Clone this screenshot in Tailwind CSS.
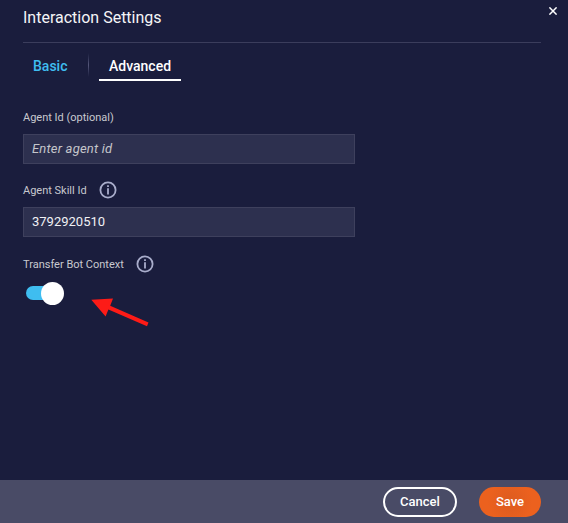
<!DOCTYPE html>
<html lang="en">
<head>
<meta charset="utf-8">
<title>Interaction Settings</title>
<script src="https://cdn.jsdelivr.net/npm/@tailwindcss/browser@4"></script>
</head>
<body class="bg-[#1a1d3d]">
<div class="relative flex h-[523px] w-[568px] flex-col overflow-hidden bg-[#1a1d3d] font-[Roboto,sans-serif] text-white">
  <button class="absolute top-[7px] right-[11px]" aria-label="Close">
    <svg class="block" width="8" height="8" viewBox="0 0 8 8" fill="none" stroke="#fff" stroke-width="1.5"><path d="M.4.4l7.2 7.2M7.6.4L.4 7.6"/></svg>
  </button>
  <header class="mr-[27px] ml-[23px] h-[43px] border-b border-[#3b3d5c] pt-[6px]">
    <h1 class="text-[16px] leading-[24px] whitespace-nowrap text-[#f5f5f7]">Interaction Settings</h1>
  </header>
  <nav class="ml-[23px] flex h-[38px] items-end text-[14px] font-medium">
    <div class="h-[25px] w-[65px] pl-[10px] leading-[20px] text-[#3fbdf0]">Basic</div>
    <div class="mr-[10px] mb-1 h-[24px] w-px bg-linear-to-b from-[#1a1d3d] via-[#55577a] to-[#1a1d3d]"></div>
    <div class="h-[25px] w-[82px] border-b-2 border-white text-center leading-[20px]">Advanced</div>
  </nav>
  <main class="ml-[23px] flex w-[332px] grow flex-col text-[11px] text-[#c8c9cf]">
    <label class="mt-[29px] h-[24px] leading-[16px]">Agent Id (optional)</label>
    <div class="h-[30px] border border-[#3e405d] bg-[#2d304f] px-2 text-[13px] leading-[27px] tracking-[0.2px] text-[#c5c6cb] italic">Enter agent id</div>
    <div class="mt-[17px] flex h-[26px] gap-[12px]">
      <span class="w-[64px] pt-[2px] leading-[16px] whitespace-nowrap">Agent Skill Id</span>
      <svg width="18" height="18" viewBox="0 0 18 18" fill="none" stroke="#a9adcb" stroke-width="1.8"><circle cx="9" cy="9" r="7.6"/><path d="M9 7.2v6.3M9 4.3v1.8"/></svg>
    </div>
    <div class="h-[30px] border border-[#3e405d] bg-[#2d304f] px-2 text-[13px] leading-[27px] text-[#f1f1f4]">3792920510</div>
    <div class="mt-[18px] flex h-[26px] gap-[12px]">
      <span class="w-[101px] pt-[2px] leading-[16px] whitespace-nowrap">Transfer Bot Context</span>
      <svg width="18" height="18" viewBox="0 0 18 18" fill="none" stroke="#a9adcb" stroke-width="1.8"><circle cx="9" cy="9" r="7.6"/><path d="M9 7.2v6.3M9 4.3v1.8"/></svg>
    </div>
    <div class="mt-px ml-[3px] flex h-[23px] w-[38px]">
      <div class="mt-[4px] h-[14px] w-[26px] rounded-full bg-[#3fbdf0]"></div>
      <div class="-ml-[11px] size-[23px] shrink-0 rounded-full bg-white"></div>
    </div>
  </main>
  <svg class="absolute top-[290px] left-[85px]" width="75" height="45" viewBox="85 290 75 45"><path fill="#fd1b17" d="M91.3 299.8L113 298.5 110.2 305.8 148.5 322.6 147 326.2 108.4 309.5 105.6 316.5Z"/></svg>
  <footer class="flex h-[43px] items-start justify-end gap-[22px] bg-[#494b66] pt-[7px] pr-[27px] text-[13px] font-medium">
    <button class="h-[30px] w-[74px] rounded-full border-2 border-white">Cancel</button>
    <button class="h-[30px] w-[62px] rounded-full bg-[radial-gradient(circle,#dc5b1f_0%,#ec611e_65%)]">Save</button>
  </footer>
</div>
</body>
</html>
